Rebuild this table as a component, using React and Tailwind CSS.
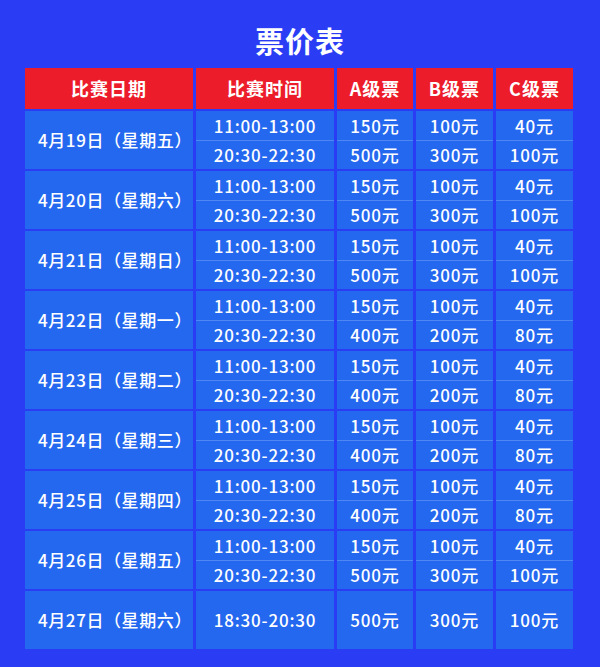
const rows = [
  { date: "4月19日（星期五）", slots: [["11:00-13:00", "150元", "100元", "40元"], ["20:30-22:30", "500元", "300元", "100元"]] },
  { date: "4月20日（星期六）", slots: [["11:00-13:00", "150元", "100元", "40元"], ["20:30-22:30", "500元", "300元", "100元"]] },
  { date: "4月21日（星期日）", slots: [["11:00-13:00", "150元", "100元", "40元"], ["20:30-22:30", "500元", "300元", "100元"]] },
  { date: "4月22日（星期一）", slots: [["11:00-13:00", "150元", "100元", "40元"], ["20:30-22:30", "400元", "200元", "80元"]] },
  { date: "4月23日（星期二）", slots: [["11:00-13:00", "150元", "100元", "40元"], ["20:30-22:30", "400元", "200元", "80元"]] },
  { date: "4月24日（星期三）", slots: [["11:00-13:00", "150元", "100元", "40元"], ["20:30-22:30", "400元", "200元", "80元"]] },
  { date: "4月25日（星期四）", slots: [["11:00-13:00", "150元", "100元", "40元"], ["20:30-22:30", "400元", "200元", "80元"]] },
  { date: "4月26日（星期五）", slots: [["11:00-13:00", "150元", "100元", "40元"], ["20:30-22:30", "500元", "300元", "100元"]] },
  { date: "4月27日（星期六）", slots: [["18:30-20:30", "500元", "300元", "100元"]] },
];

const headers = ["比赛日期", "比赛时间", "A级票", "B级票", "C级票"];
const cols = "grid grid-cols-[168px_138px_76px_77px_77px] gap-x-[3px]";

const App = () => {
  return (
    <div
      className="min-h-[667px] w-[600px] bg-[#2a3df5] text-white"
      style={{ fontFamily: '"Noto Sans CJK SC", "Noto Sans", sans-serif' }}
    >
      <div className="h-[68px] pt-3 flex items-center justify-center">
        <h1 className="text-[29px] font-bold leading-none tracking-[1px]">票价表</h1>
      </div>

      <div className="ml-[25px] w-[549px] flex flex-col gap-y-[2px]">
        <div className={cols}>
          {headers.map((h) => (
            <div key={h} className="h-[41px] bg-[#ec1c2a] flex items-center justify-center text-[18px] font-bold tracking-[1px]">
              {h}
            </div>
          ))}
        </div>

        {rows.map((r) => (
          <div key={r.date} className={cols}>
            <div className="h-[58px] bg-[#2468ef] flex items-center justify-center pl-3 text-[17px] font-medium tracking-[0.6px]">
              {r.date}
            </div>
            {[0, 1, 2, 3].map((c) => (
              <div key={c} className="h-[58px] bg-[#2468ef] flex flex-col">
                {r.slots.map((s, i) => (
                  <div
                    key={i}
                    className={
                      "flex-1 flex items-center justify-center text-[17px] font-medium tracking-[0.8px] " +
                      (i === 0 && r.slots.length > 1 ? "border-b border-[#4f88f5]" : "")
                    }
                  >
                    {s[c]}
                  </div>
                ))}
              </div>
            ))}
          </div>
        ))}
      </div>
    </div>
  );
};

export default App;
